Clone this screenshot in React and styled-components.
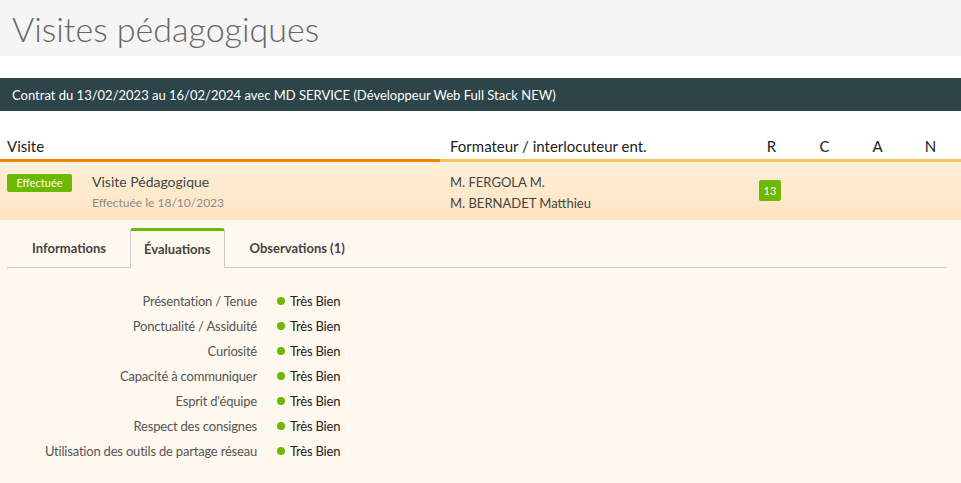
import React from "react";
import styled, { createGlobalStyle } from "styled-components";

const GlobalStyle = createGlobalStyle`
  html, body {
    margin: 0;
    padding: 0;
    background: #fff;
    font-family: Lato, "Liberation Sans", sans-serif;
  }
`;

const Page = styled.div`
  width: 961px;
  height: 483px;
  overflow: hidden;
  background: #fff;
`;

const Header = styled.div`
  background: #f5f5f5;
  height: 56px;
  padding-left: 12px;
  display: flex;
  align-items: center;
`;

const Title = styled.h1`
  margin: 0;
  font-size: 34px;
  font-weight: 300;
  color: #666;
`;

const ContractBar = styled.div`
  margin-top: 22px;
  height: 33px;
  background: #2d4448;
  color: #fff;
  font-size: 13px;
  display: flex;
  align-items: center;
  padding-left: 12px;
`;

const Grid = styled.div`
  display: grid;
  grid-template-columns: 440px 1fr 53px 53px 53px 53px;
  padding-right: 4px;
`;

const HeadRow = styled(Grid)`
  margin-top: 22px;
  height: 26px;
  align-items: center;
  font-size: 15px;
  color: #222;
  border-bottom: 3px solid #f9c45e;
`;

const HeadCell = styled.div`
  height: 100%;
  display: flex;
  align-items: center;
  padding-left: ${(p) => (p.$center ? "0" : "10px")};
  justify-content: ${(p) => (p.$center ? "center" : "flex-start")};
  ${(p) =>
    p.$accent &&
    `border-bottom: 3px solid #f28300; margin-bottom: -3px; padding-left: 7px;`}
`;

const DataRow = styled(Grid)`
  height: 58px;
  background: linear-gradient(#fdefd9, #fde4c0);
  align-items: start;
`;

const VisitCell = styled.div`
  display: flex;
  gap: 20px;
  padding: 12px 0 0 7px;
`;

const Badge = styled.span`
  background: #6db800;
  color: #fff;
  font-size: 11px;
  border-radius: 2px;
  height: 18px;
  line-height: 18px;
  width: 65px;
  text-align: center;
  flex: none;
`;

const VisitInfo = styled.div`
  display: flex;
  flex-direction: column;
  gap: 5px;
`;

const VisitName = styled.div`
  font-size: 14px;
  color: #444;
  line-height: 16px;
`;

const VisitDate = styled.div`
  font-size: 12px;
  color: #8a8a8a;
  line-height: 16px;
`;

const Names = styled.div`
  padding: 12px 0 0 10px;
  display: flex;
  flex-direction: column;
  gap: 4px;
  font-size: 13px;
  color: #444;
  line-height: 17px;
`;

const ScoreCell = styled.div`
  display: flex;
  justify-content: center;
  padding-top: 18px;
`;

const Score = styled.span`
  background: #6db800;
  color: #fff;
  font-size: 11px;
  width: 22px;
  height: 21px;
  line-height: 21px;
  text-align: center;
  border-radius: 2px;
  margin-right: 3px;
`;

const Panel = styled.div`
  background: #fff8ee;
  padding: 9px 14px 30px 7px;
  height: 100%;
`;

const Tabs = styled.div`
  display: flex;
  border-bottom: 1px solid #ccc;
  height: 38px;
  align-items: flex-end;
`;

const Tab = styled.div`
  font-size: 13px;
  font-weight: 700;
  color: #444;
  height: 38px;
  padding: 0 ${(p) => (p.$active ? "13px" : "25px")};
  display: flex;
  align-items: center;
  box-sizing: border-box;
  ${(p) =>
    p.$active &&
    `
    border: 1px solid #ccc;
    border-top: 3px solid #6db800;
    border-bottom: none;
    border-radius: 3px 3px 0 0;
    background: #fff8ee;
    margin: 0 0 -1px -1px;
    height: 40px;
    padding-bottom: 1px;
  `}
`;

const EvalList = styled.div`
  display: grid;
  grid-template-columns: 250px auto;
  column-gap: 20px;
  row-gap: 7px;
  padding-top: 24px;
  font-size: 13px;
  line-height: 18px;
  letter-spacing: -0.2px;
  align-items: center;
`;

const EvalLabel = styled.div`
  text-align: right;
  color: #555;
`;

const EvalValue = styled.div`
  display: flex;
  align-items: center;
  gap: 5px;
  color: #222;
`;

const Dot = styled.span`
  width: 8px;
  height: 8px;
  border-radius: 50%;
  background: #6db800;
`;

const criteria = [
  "Présentation / Tenue",
  "Ponctualité / Assiduité",
  "Curiosité",
  "Capacité à communiquer",
  "Esprit d'équipe",
  "Respect des consignes",
  "Utilisation des outils de partage réseau",
];

export default function App() {
  return (
    <Page>
      <GlobalStyle />
      <Header>
        <Title>Visites pédagogiques</Title>
      </Header>
      <ContractBar>
        Contrat du 13/02/2023 au 16/02/2024 avec MD SERVICE (Développeur Web Full Stack NEW)
      </ContractBar>
      <HeadRow>
        <HeadCell $accent>Visite</HeadCell>
        <HeadCell>Formateur / interlocuteur ent.</HeadCell>
        <HeadCell $center>R</HeadCell>
        <HeadCell $center>C</HeadCell>
        <HeadCell $center>A</HeadCell>
        <HeadCell $center>N</HeadCell>
      </HeadRow>
      <DataRow>
        <VisitCell>
          <Badge>Effectuée</Badge>
          <VisitInfo>
            <VisitName>Visite Pédagogique</VisitName>
            <VisitDate>Effectuée le 18/10/2023</VisitDate>
          </VisitInfo>
        </VisitCell>
        <Names>
          <div>M. FERGOLA M.</div>
          <div>M. BERNADET Matthieu</div>
        </Names>
        <ScoreCell>
          <Score>13</Score>
        </ScoreCell>
        <ScoreCell />
        <ScoreCell />
        <ScoreCell />
      </DataRow>
      <Panel>
        <Tabs>
          <Tab>Informations</Tab>
          <Tab $active>Évaluations</Tab>
          <Tab>Observations (1)</Tab>
        </Tabs>
        <EvalList>
          {criteria.map((c) => (
            <React.Fragment key={c}>
              <EvalLabel>{c}</EvalLabel>
              <EvalValue>
                <Dot />
                Très Bien
              </EvalValue>
            </React.Fragment>
          ))}
        </EvalList>
      </Panel>
    </Page>
  );
}
